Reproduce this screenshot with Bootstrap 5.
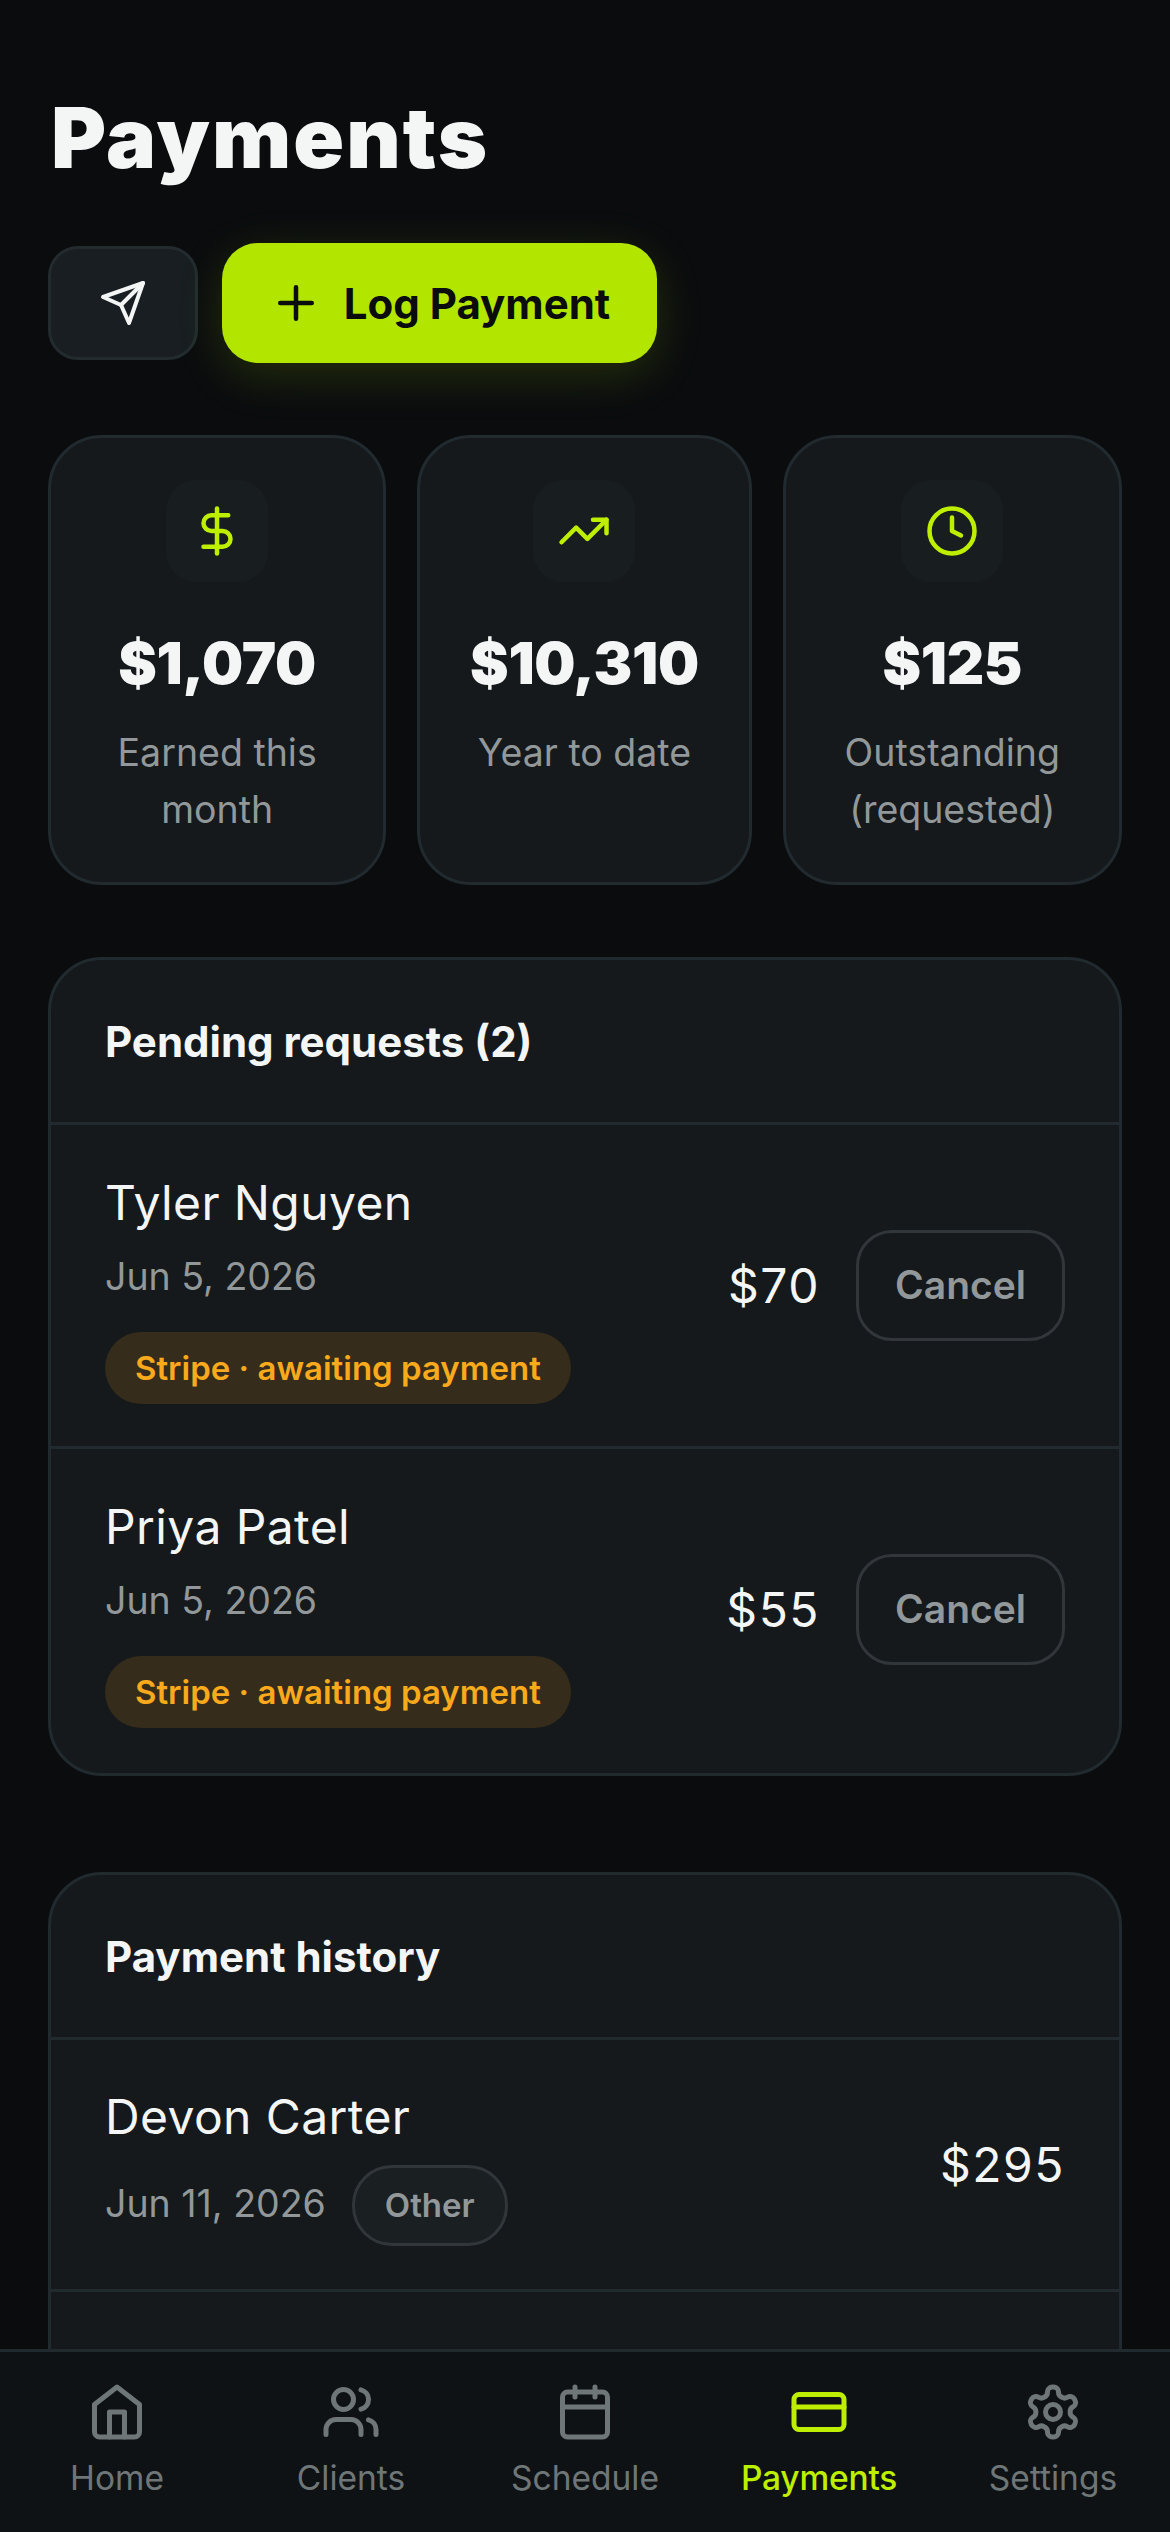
<!DOCTYPE html>
<html lang="en">
<head>
<meta charset="utf-8">
<title>Payments</title>
<link href="https://cdn.jsdelivr.net/npm/bootstrap@5.3.0/dist/css/bootstrap.min.css" rel="stylesheet">
<style>
html,body{height:2532px;overflow:hidden}
body{background:#0a0c0e;font-family:Inter,"Liberation Sans",sans-serif;color:#f4f6f6}
.pg{padding:84px 48px 0}
.ttl{font-size:84px;line-height:108px;font-weight:900;letter-spacing:2px;margin:0 0 51px 3px;color:#f4f6f6}
.acts{height:120px;gap:24px;margin-bottom:72px}
.ibtn{width:150px;height:114px;background:#181e21;border:3px solid #232b2f;border-radius:30px;color:#f4f6f6}
.lbtn{width:435px;height:120px;background:#b2e600;border:0;border-radius:36px;color:#0a0c0e;font-size:42px;font-weight:700;gap:21px;box-shadow:0 12px 48px rgba(178,230,0,.16)}
.stats{display:grid;grid-template-columns:338fr 334fr 339fr;gap:31px;margin-bottom:72px}
.stat{height:450px;background:#15191c;border:3px solid #212a2e;border-radius:54px;padding:42px 24px 0;text-align:center}
.sico{width:102px;height:102px;background:#181d20;border-radius:30px;color:#bfef00;margin:0 auto 45px}
.sval{font-size:58px;line-height:72px;font-weight:900;letter-spacing:-.3px;color:#f4f6f6;margin-bottom:25px}
.slab{font-size:37.5px;line-height:57px;color:#92989a}
.sect{background:#15191c;border:3px solid #212a2e;border-radius:54px;margin-bottom:96px}
.shead{height:165px;padding:0 54px;font-size:42px;font-weight:700;border-bottom:3px solid #212a2e;color:#f4f6f6}
.prow{height:324px;padding:0 54px;border-bottom:3px solid #212a2e}
.prow:last-child{border-bottom:0;padding-bottom:3px}
.hrow{height:252px;padding:0 54px;border-bottom:3px solid #212a2e}
.hrow:last-child{border-bottom:0}
.pinfo{padding-top:3px}
.nm{font-size:48px;line-height:66px;letter-spacing:.4px;color:#f4f6f6;margin-bottom:12px}
.dt{font-size:37.5px;line-height:57px;color:#92989a}
.amt{font-size:48px;color:#f4f6f6;letter-spacing:1.5px}
.pend{display:inline-block;height:72px;line-height:72px;padding:0 30px;border-radius:36px;background:#352c1b;color:#f8a91c;font-size:33px;font-weight:600;margin-top:27px}
.canc{width:209px;height:111px;background:transparent;border:3px solid #30363a;border-radius:36px;color:#92989a;font-size:39px;font-weight:600;padding:0}
.oth{height:81px;line-height:75px;padding:0 30px;border-radius:40px;background:#1a1f22;border:3px solid #30363a;color:#92989a;font-size:33px;font-weight:600;margin-top:3px}
.amtgap{gap:36px}
.ogap{gap:26px}
.bnav{position:fixed;left:0;right:0;bottom:0;height:183px;background:#0e1214;border-top:3px solid #212a2e}
.nit{flex:1 1 0;color:#6f7678;font-size:33.5px;line-height:48px;padding-top:30px;gap:12px}
.nit.on{color:#bfef00;font-weight:500;letter-spacing:-.2px}
svg{display:block;fill:none;stroke:currentColor;stroke-width:2;stroke-linecap:round;stroke-linejoin:round}
</style>
</head>
<body>
<main class="pg">
  <h1 class="ttl">Payments</h1>
  <div class="d-flex align-items-center acts">
    <button class="ibtn d-flex align-items-center justify-content-center p-0" aria-label="Send">
      <svg width="48" height="48" viewBox="0 0 24 24"><path d="m22 2-7 20-4-9-9-4Z"/><path d="M22 2 11 13"/></svg>
    </button>
    <button class="lbtn d-flex align-items-center justify-content-center p-0">
      <svg width="54" height="54" viewBox="0 0 24 24"><path d="M5 12h14M12 5v14"/></svg>
      <span>Log Payment</span>
    </button>
  </div>
  <div class="stats">
    <div class="stat">
      <div class="sico d-flex align-items-center justify-content-center"><svg width="54" height="54" viewBox="0 0 24 24"><path d="M12 2v20"/><path d="M17 5H9.5a3.5 3.5 0 0 0 0 7h5a3.5 3.5 0 0 1 0 7H6"/></svg></div>
      <div class="sval">$1,070</div>
      <div class="slab">Earned this month</div>
    </div>
    <div class="stat">
      <div class="sico d-flex align-items-center justify-content-center"><svg width="54" height="54" viewBox="0 0 24 24"><path d="M22 7l-8.5 8.5-5-5L2 17"/><path d="M16 7h6v6"/></svg></div>
      <div class="sval">$10,310</div>
      <div class="slab">Year to date</div>
    </div>
    <div class="stat">
      <div class="sico d-flex align-items-center justify-content-center"><svg width="54" height="54" viewBox="0 0 24 24"><circle cx="12" cy="12" r="10"/><path d="M12 6v6l4 2"/></svg></div>
      <div class="sval">$125</div>
      <div class="slab">Outstanding (requested)</div>
    </div>
  </div>

  <section class="sect">
    <div class="shead d-flex align-items-center">Pending requests (2)</div>
    <div class="prow d-flex align-items-center justify-content-between">
      <div class="pinfo">
        <div class="nm">Tyler Nguyen</div>
        <div class="dt">Jun 5, 2026</div>
        <span class="pend">Stripe · awaiting payment</span>
      </div>
      <div class="d-flex align-items-center amtgap">
        <span class="amt">$70</span>
        <button class="canc">Cancel</button>
      </div>
    </div>
    <div class="prow d-flex align-items-center justify-content-between">
      <div class="pinfo">
        <div class="nm">Priya Patel</div>
        <div class="dt">Jun 5, 2026</div>
        <span class="pend">Stripe · awaiting payment</span>
      </div>
      <div class="d-flex align-items-center amtgap">
        <span class="amt">$55</span>
        <button class="canc">Cancel</button>
      </div>
    </div>
  </section>

  <section class="sect">
    <div class="shead d-flex align-items-center">Payment history</div>
    <div class="hrow d-flex align-items-center justify-content-between">
      <div>
        <div class="nm">Devon Carter</div>
        <div class="d-flex align-items-center ogap">
          <span class="dt">Jun 11, 2026</span>
          <span class="oth">Other</span>
        </div>
      </div>
      <span class="amt">$295</span>
    </div>
    <div class="hrow"></div>
  </section>
</main>

<nav class="bnav d-flex">
  <div class="nit d-flex flex-column align-items-center">
    <svg width="60" height="60" viewBox="0 0 24 24"><path d="M3 9l9-7 9 7v11a2 2 0 0 1-2 2H5a2 2 0 0 1-2-2z"/><path d="M9 22V12h6v10"/></svg><span>Home</span></div>
  <div class="nit d-flex flex-column align-items-center">
    <svg width="60" height="60" viewBox="0 0 24 24"><path d="M16 21v-2a4 4 0 0 0-4-4H6a4 4 0 0 0-4 4v2"/><circle cx="9" cy="7" r="4"/><path d="M22 21v-2a4 4 0 0 0-3-3.87"/><path d="M16 3.13a4 4 0 0 1 0 7.75"/></svg><span>Clients</span></div>
  <div class="nit d-flex flex-column align-items-center">
    <svg width="60" height="60" viewBox="0 0 24 24"><rect x="3" y="4" width="18" height="18" rx="2"/><path d="M16 2v4M8 2v4M3 10h18"/></svg><span>Schedule</span></div>
  <div class="nit on d-flex flex-column align-items-center">
    <svg width="60" height="60" viewBox="0 0 24 24"><rect x="2" y="5" width="20" height="14" rx="2"/><path d="M2 10h20"/></svg><span>Payments</span></div>
  <div class="nit d-flex flex-column align-items-center">
    <svg width="60" height="60" viewBox="0 0 24 24"><path d="M12.22 2h-.44a2 2 0 0 0-2 2v.18a2 2 0 0 1-1 1.73l-.43.25a2 2 0 0 1-2 0l-.15-.08a2 2 0 0 0-2.73.73l-.22.38a2 2 0 0 0 .73 2.73l.15.1a2 2 0 0 1 1 1.72v.51a2 2 0 0 1-1 1.74l-.15.09a2 2 0 0 0-.73 2.73l.22.38a2 2 0 0 0 2.73.73l.15-.08a2 2 0 0 1 2 0l.43.25a2 2 0 0 1 1 1.73V20a2 2 0 0 0 2 2h.44a2 2 0 0 0 2-2v-.18a2 2 0 0 1 1-1.73l.43-.25a2 2 0 0 1 2 0l.15.08a2 2 0 0 0 2.73-.73l.22-.39a2 2 0 0 0-.73-2.73l-.15-.08a2 2 0 0 1-1-1.74v-.5a2 2 0 0 1 1-1.74l.15-.09a2 2 0 0 0 .73-2.73l-.22-.38a2 2 0 0 0-2.73-.73l-.15.08a2 2 0 0 1-2 0l-.43-.25a2 2 0 0 1-1-1.73V4a2 2 0 0 0-2-2z"/><circle cx="12" cy="12" r="3"/></svg><span>Settings</span></div>
</nav>
<script src="https://cdn.jsdelivr.net/npm/bootstrap@5.3.0/dist/js/bootstrap.bundle.min.js"></script>
</body>
</html>
